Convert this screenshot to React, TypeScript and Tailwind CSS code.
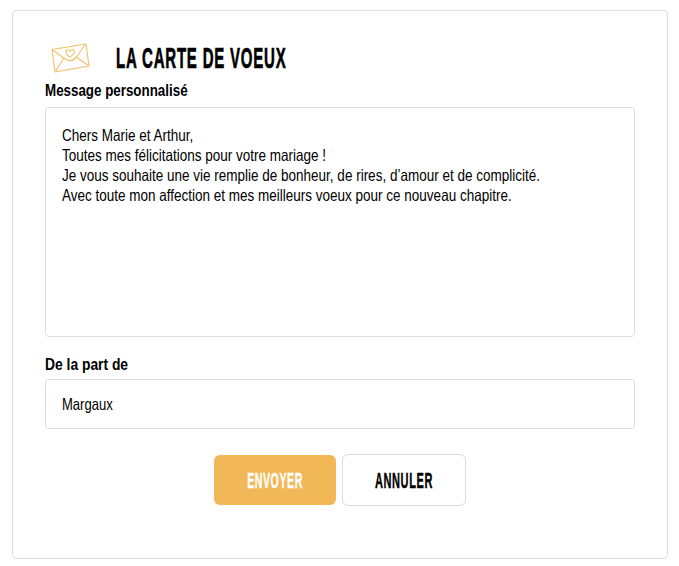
export default function App() {
  const body = "font-['Liberation_Sans',sans-serif]";
  const lines = [
    "Chers Marie et Arthur,",
    "Toutes mes félicitations pour votre mariage !",
    "Je vous souhaite une vie remplie de bonheur, de rires, d’amour et de complicité.",
    "Avec toute mon affection et mes meilleurs voeux pour ce nouveau chapitre.",
  ];
  return (
    <div className={`h-[566px] w-[679px] bg-white pl-3 pr-3 pt-2.5 pb-2 text-black ${body}`}>
      <div className="h-[549px] w-[656px] rounded border border-[#dddddd] px-8">
        <div className="flex h-[66px] items-center pt-[27px] pl-[5px]">
          <svg width="40" height="32" viewBox="0 0 40 32" fill="none" stroke="#f2c06c" strokeWidth="1.1" strokeLinejoin="round" strokeLinecap="round">
            <path d="M2 7.5 L36 2 L39 24 L5 30 Z" />
            <path d="M2.5 8 C9 12 13 16 16 17.5 C19 19.5 23 18.5 26 15.5 L35.5 2.5" />
            <path d="M5.5 29.5 L14 15.5 M38.5 23.5 L26 15" />
            <path d="M19.5 15 C15 12 15.2 7.5 17.8 7.7 C19 7.8 19.6 8.8 19.9 9.6 C20.6 8 22.8 6.9 24 8.2 C25.4 10 23 13.6 19.5 15 Z" />
          </svg>
          <h1 className="ml-[26px] inline-block origin-left scale-x-[0.5] whitespace-nowrap text-[30px] font-bold leading-none tracking-[1.6px] [-webkit-text-stroke:0.7px_black]">LA CARTE DE VOEUX</h1>
        </div>
        <label className="block h-[30px] origin-left scale-x-[0.835] whitespace-nowrap pt-px text-[16px] font-bold leading-[26px]">Message personnalisé</label>
        <div className="h-[230px] w-[590px] rounded border border-[#dddddd] px-4 pt-[17px] text-[16.5px] leading-[20px]">
          {lines.map((l) => (
            <div key={l} className="origin-left scale-x-[0.818] whitespace-nowrap">{l}</div>
          ))}
        </div>
        <label className="mt-[14px] block h-[28px] origin-left scale-x-[0.865] whitespace-nowrap pt-px text-[16px] font-bold leading-[26px]">De la part de</label>
        <div className="flex h-[50px] w-[590px] items-center rounded border border-[#dddddd] px-4 text-[16.5px]">
          <span className="origin-left scale-x-[0.79] whitespace-nowrap">Margaux</span>
        </div>
        <div className="mt-[25px] flex items-center justify-center gap-[6px]">
          <button className="h-[50px] w-[122px] rounded-md bg-[#f2b857] text-[22px] font-bold text-white">
            <span className="inline-block scale-x-[0.48] whitespace-nowrap tracking-[1.2px] [-webkit-text-stroke:0.4px_white]">ENVOYER</span>
          </button>
          <button className="h-[52px] w-[124px] rounded-md border border-[#dddddd] bg-white text-[22px] font-bold">
            <span className="inline-block scale-x-[0.5] whitespace-nowrap tracking-[1.2px] [-webkit-text-stroke:0.4px_black]">ANNULER</span>
          </button>
        </div>
      </div>
    </div>
  );
}
